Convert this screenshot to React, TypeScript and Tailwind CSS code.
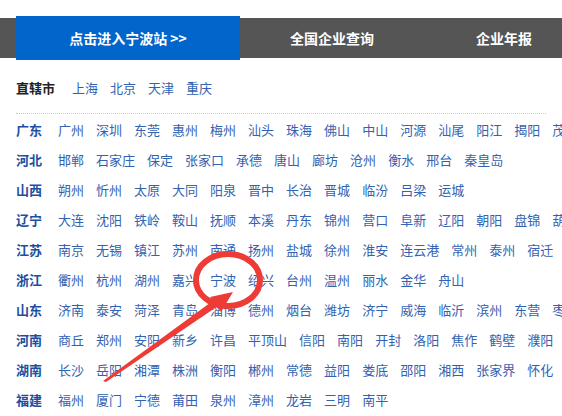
const cities = [
  { name: "广东", list: ["广州", "深圳", "东莞", "惠州", "梅州", "汕头", "珠海", "佛山", "中山", "河源", "汕尾", "阳江", "揭阳", "茂名", "湛江"] },
  { name: "河北", list: ["邯郸", "石家庄", "保定", "张家口", "承德", "唐山", "廊坊", "沧州", "衡水", "邢台", "秦皇岛"] },
  { name: "山西", list: ["朔州", "忻州", "太原", "大同", "阳泉", "晋中", "长治", "晋城", "临汾", "吕梁", "运城"] },
  { name: "辽宁", list: ["大连", "沈阳", "铁岭", "鞍山", "抚顺", "本溪", "丹东", "锦州", "营口", "阜新", "辽阳", "朝阳", "盘锦", "葫芦岛"] },
  { name: "江苏", list: ["南京", "无锡", "镇江", "苏州", "南通", "扬州", "盐城", "徐州", "淮安", "连云港", "常州", "泰州", "宿迁"] },
  { name: "浙江", list: ["衢州", "杭州", "湖州", "嘉兴", "宁波", "绍兴", "台州", "温州", "丽水", "金华", "舟山"] },
  { name: "山东", list: ["济南", "泰安", "菏泽", "青岛", "淄博", "德州", "烟台", "潍坊", "济宁", "威海", "临沂", "滨州", "东营", "枣庄"] },
  { name: "河南", list: ["商丘", "郑州", "安阳", "新乡", "许昌", "平顶山", "信阳", "南阳", "开封", "洛阳", "焦作", "鹤壁", "濮阳"] },
  { name: "湖南", list: ["长沙", "岳阳", "湘潭", "株洲", "衡阳", "郴州", "常德", "益阳", "娄底", "邵阳", "湘西", "张家界", "怀化"] },
  { name: "福建", list: ["福州", "厦门", "宁德", "莆田", "泉州", "漳州", "龙岩", "三明", "南平"] },
];

const direct = ["上海", "北京", "天津", "重庆"];

export default function App() {
  return (
    <div
      className="relative w-[562px] h-[416px] overflow-hidden bg-white"
      style={{ fontFamily: '"Noto Sans CJK SC", "Noto Sans", sans-serif' }}
    >
      {/* Top nav */}
      <div className="mt-[18px] h-[40px] bg-[#555555] flex items-center text-white font-bold text-[14px]">
        <div className="ml-[16px] w-[224px] h-[44px] -my-[2px] bg-[#0066cc] flex items-center justify-center">
          点击进入宁波站 &gt;&gt;
        </div>
        <div className="ml-[50px]">全国企业查询</div>
        <div className="ml-[102px]">企业年报</div>
      </div>

      {/* Municipalities */}
      <div className="mx-[16px] pt-[15px] pb-[10px] border-b border-dotted border-[#c8c8c8] flex items-center h-[56px] leading-[30px] text-[13px] whitespace-nowrap">
        <span className="font-bold text-[#222222] w-[56px]">直辖市</span>
        <div className="flex gap-[12px] text-[#3262b0]">
          {direct.map((c) => (
            <span key={c}>{c}</span>
          ))}
        </div>
      </div>

      {/* Provinces */}
      <div className="pl-[16px] pt-[1px] text-[13px] leading-[30px] whitespace-nowrap">
        {cities.map((p) => (
          <div key={p.name} className="flex h-[30px]">
            <span className="w-[42px] shrink-0 font-bold text-[#1c4f9f]">{p.name}</span>
            <div className="flex gap-[12px] text-[#3262b0]">
              {p.list.map((c) => (
                <span key={c} className="shrink-0">{c}</span>
              ))}
            </div>
          </div>
        ))}
      </div>

      {/* Red annotation */}
      <svg className="absolute left-0 top-0 pointer-events-none" width="562" height="416" viewBox="0 0 562 416">
        <ellipse cx="228" cy="280" rx="32" ry="26" fill="none" stroke="#ee3b36" strokeWidth="6" />
        <polygon points="103,381 106,382 218,306 214,300" fill="#ee3b36" />
        <polygon points="233,292 210,297 221,312" fill="#ee3b36" />
      </svg>
    </div>
  );
}
